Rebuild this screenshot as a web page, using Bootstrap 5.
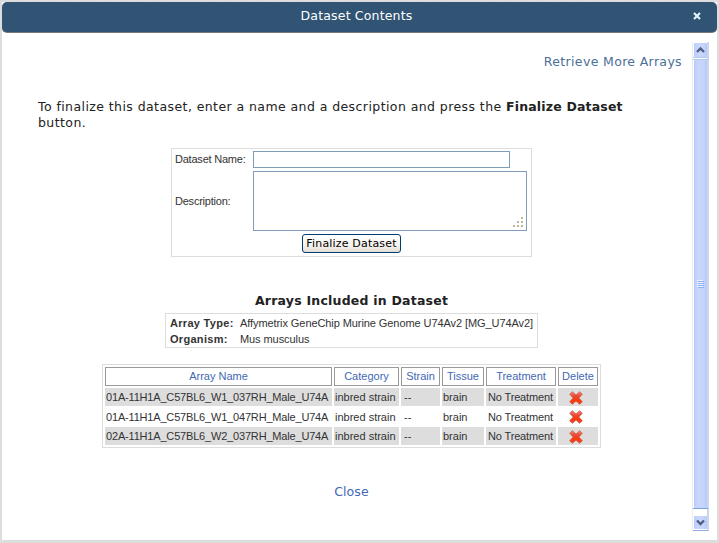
<!DOCTYPE html>
<html lang="en">
<head>
<meta charset="utf-8">
<meta name="viewport" content="width=device-width, initial-scale=1">
<title>Dataset Contents</title>
<link href="https://cdn.jsdelivr.net/npm/bootstrap@5.3.0/dist/css/bootstrap.min.css" rel="stylesheet">
<style>
html, body { height: 100%; overflow: hidden; }
body { background: #ddd; font-family: "DejaVu Sans", Verdana, sans-serif; font-size: 12.5px; line-height: 16px; color: #222; padding: 2px 2px 3px; }
a { text-decoration: none; color: #3f68b5; }
.dialog-window { width: 715px; height: 538px; background: #fff; }
.dialog-title { height: 31px; color: #fff; border-bottom: 1px solid #777; border-radius: 5px; background: repeating-linear-gradient(45deg, #2f5272 0 1px, #325575 1px 3px); letter-spacing: .17px; padding: 0 10px 2px 16px; }
.close-x { width: 20px; height: 20px; border: 0; background: none; padding: 0; }
.dialog-body { height: 507px; padding: 9px 8px 9px 18px; }
.pane { width: 663px; }
.more-link { color: #4a6f98; letter-spacing: .35px; margin-top: 12px; padding-right: 1px; }
.intro { margin: 29px 0 0 18px; letter-spacing: .42px; }
.intro b { letter-spacing: .17px; }
.arial { font-family: "Liberation Sans", Arial, sans-serif; font-size: 11px; line-height: 13px; color: #333; }
.box { border: 1px solid #ddd; }
.form-box { width: 361px; height: 109px; margin-top: 17px; padding: 2px 3px 0; }
.field-label { width: 78px; letter-spacing: -.22px; }
.field { border: 1px solid #7f9db9; border-radius: 0; padding: 0; background: #fff; outline: 0; }
.field-name { width: 257px; height: 17px; }
.field-desc { width: 274px; height: 60px; resize: none; display: block; }
.desc-row { margin-top: 3px; }
.grip { right: 4px; bottom: 4px; }
.button-row { padding-top: 3px; }
.btn-xp { width: 99px; height: 19px; border: 1px solid #003c74; border-radius: 3px; background: linear-gradient(#fff, #f5f3ee 60%, #e3dcd5); padding: 0; font-family: "DejaVu Sans", Verdana, sans-serif; font-size: 11px; line-height: 17px; color: #000; letter-spacing: .18px; }
.section-title { font-size: 12.5px; font-weight: 700; line-height: 16px; margin: 36px 0 0; letter-spacing: .22px; }
.info-box { width: 373px; height: 35px; margin-top: 4px; padding: 1px 4px; line-height: 16px; letter-spacing: -.08px; white-space: nowrap; }
.info-box dt { width: 70px; flex: none; font-size: 11px; line-height: 16px; letter-spacing: .3px; }
.info-box dd { line-height: 16px; }
.arrays { width: 499px; height: 84px; margin-top: 16px; border: 1px solid #ddd; border-collapse: separate; border-spacing: 2px; table-layout: fixed; line-height: 13px; }
.arrays th { height: 19px; padding: 0; border: 1px solid #999; font-weight: 400; color: #3f68b5; text-align: center; }
.arrays td { height: 18px; padding: 0 1px; white-space: nowrap; }
.arrays tr.mid td { height: 17px; padding-top: 1px; }
.arrays tr.shade td { background: #ddd; }
.arrays td:nth-child(1) { letter-spacing: -.18px; }
.arrays td:nth-child(3) { padding-left: 3px; }
.arrays td:nth-child(5) { padding-left: 2px; letter-spacing: -.15px; }
.arrays td:nth-child(6) { padding: 2px 4px 0 0; }
.arrays tr.mid td:nth-child(6) { padding-top: 1px; }
.close-link { margin-top: 36px; letter-spacing: .1px; }
.scroller { width: 17px; }
</style>
</head>
<body>
<div class="dialog-window">
  <header class="dialog-title d-flex align-items-center">
    <span class="flex-fill text-center ps-2">Dataset Contents</span>
    <button class="close-x d-flex align-items-center justify-content-center" aria-label="Close"><svg width="8" height="8"><path d="M1 1l6 6M7 1l-6 6" stroke="#dff4f4" stroke-width="2.2"/></svg></button>
  </header>
  <div class="dialog-body d-flex justify-content-between">
    <main class="pane d-flex flex-column align-items-center">
      <a href="#" class="more-link align-self-end">Retrieve More Arrays</a>
      <p class="intro align-self-start">To finalize this dataset, enter a name and a description and press the <b>Finalize Dataset</b><br>button.</p>
      <form class="form-box box arial">
        <div class="d-flex align-items-center"><label class="field-label" for="dn">Dataset Name:</label><input id="dn" class="field field-name"></div>
        <div class="desc-row d-flex align-items-center"><label class="field-label" for="ds">Description:</label>
          <div class="position-relative"><textarea id="ds" class="field field-desc"></textarea>
            <svg class="grip position-absolute" width="10" height="10" fill="#bab5a0"><path d="M8 0h2v2H8zM4 4h2v2H4zM8 4h2v2H8zM0 8h2v2H0zM4 8h2v2H4zM8 8h2v2H8z"/></svg></div></div>
        <div class="button-row d-flex justify-content-center"><button type="button" class="btn-xp">Finalize Dataset</button></div>
      </form>
      <h2 class="section-title">Arrays Included in Dataset</h2>
      <dl class="info-box box arial mb-0">
        <div class="d-flex"><dt>Array Type:</dt><dd class="mb-0">Affymetrix GeneChip Murine Genome U74Av2 [MG_U74Av2]</dd></div>
        <div class="d-flex"><dt>Organism:</dt><dd class="mb-0">Mus musculus</dd></div>
      </dl>
      <table class="arrays arial">
        <colgroup><col style="width:227px"><col style="width:65px"><col style="width:39px"><col style="width:42px"><col style="width:70px"><col style="width:40px"></colgroup>
        <thead><tr><th>Array Name</th><th>Category</th><th>Strain</th><th>Tissue</th><th>Treatment</th><th>Delete</th></tr></thead>
        <tbody>
          <tr class="shade"><td>01A-11H1A_C57BL6_W1_037RH_Male_U74A</td><td>inbred strain</td><td>--</td><td>brain</td><td>No Treatment</td><td><svg class="d-block mx-auto" width="14" height="14"><use href="#del"/></svg></td></tr>
          <tr class="mid"><td>01A-11H1A_C57BL6_W1_047RH_Male_U74A</td><td>inbred strain</td><td>--</td><td>brain</td><td>No Treatment</td><td><svg class="d-block mx-auto" width="14" height="14"><use href="#del"/></svg></td></tr>
          <tr class="shade"><td>02A-11H1A_C57BL6_W2_037RH_Male_U74A</td><td>inbred strain</td><td>--</td><td>brain</td><td>No Treatment</td><td><svg class="d-block mx-auto" width="14" height="14"><use href="#del"/></svg></td></tr>
        </tbody>
      </table>
      <a href="#" class="close-link">Close</a>
    </main>
    <svg class="scroller" width="17" height="489" viewBox="0 0 17 489">
      <defs>
        <linearGradient id="thumb"><stop offset="0" stop-color="#b9ccfa"/><stop offset=".3" stop-color="#c8d6fe"/><stop offset=".75" stop-color="#c6d4fd"/><stop offset="1" stop-color="#b4c8f6"/></linearGradient>
        <linearGradient id="red" x2="0" y2="1"><stop offset="0" stop-color="#f08a80"/><stop offset=".4" stop-color="#e8442c"/><stop offset=".7" stop-color="#ff3a08"/><stop offset="1" stop-color="#e04a30"/></linearGradient>
        <symbol id="del" viewBox="0 0 14 14"><path d="M3.3 .7L7 4l3.700-3.300 2.600 2.600L9.800 7l3.500 3.700-2.600 2.600L7 10l-3.700 3.300L.7 10.700 4.200 7 .7 3.300z" fill="url(#red)" stroke="#d0493c" stroke-width=".7" stroke-linejoin="round"/></symbol>
      </defs>
      <path d="M.5 0v489" stroke="#eeede5"/><path d="M16 0v489" stroke="#8fafdd" stroke-width="1"/>
      <rect x="2" y="1" width="13" height="14" rx="1" fill="url(#thumb)"/>
      <path d="M1 15.500h15M1 17.500h15" stroke="#b4c8ee"/>
      <rect x="2" y="18" width="13" height="448" rx="1" fill="url(#thumb)"/>
      <path d="M1 466.500h15" stroke="#7fa3dc"/>
      <rect x="2" y="474" width="13" height="13" rx="1" fill="url(#thumb)"/><path d="M1 488.500h15" stroke="#8fafe2"/>
      <path d="M5 10l3.500-3.500L12 10" fill="none" stroke="#4d6185" stroke-width="2.4"/>
      <path d="M5 478.500l3.500 3.500 3.500-3.500" fill="none" stroke="#4d6185" stroke-width="2.4"/>
      <path d="M5 238.500h6M5 240.500h6M5 242.500h6M5 244.500h6" stroke="#eef4fe"/><path d="M6 239.500h6M6 241.500h6M6 243.500h6M6 245.500h6" stroke="#8cb0f8"/>
    </svg>
  </div>
</div>
<script src="https://cdn.jsdelivr.net/npm/bootstrap@5.3.0/dist/js/bootstrap.bundle.min.js"></script>
</body>
</html>
